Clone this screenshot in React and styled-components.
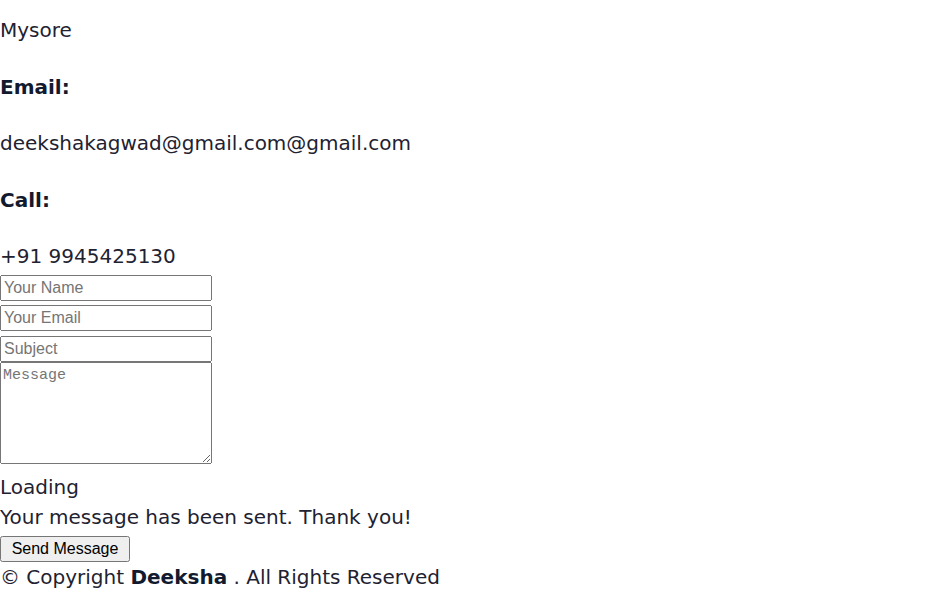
import React from "react";
import styled, { createGlobalStyle } from "styled-components";

const Global = createGlobalStyle`
  html, body { margin: 0; padding: 0; background: #ffffff; }
  body {
    font-family: "DejaVu Sans", "Open Sans", sans-serif;
    font-size: 20px;
    line-height: 30px;
    color: #1e2231;
  }
`;

const Page = styled.div`
  padding-top: 15px;
`;

const Info = styled.div`
  display: flex;
  flex-direction: column;
  gap: 26.5px;
`;

const Heading = styled.h4`
  margin: 0;
  font-size: 20px;
  line-height: 30px;
  font-weight: 700;
  color: #111a2e;
`;

const Text = styled.p`
  margin: 0;
  font-size: 20px;
  line-height: 30px;
`;

const Form = styled.form`
  display: flex;
  flex-direction: column;
  align-items: flex-start;
  margin-top: 4px;
`;

const Field = styled.input`
  box-sizing: border-box;
  width: 212px;
  height: 26px;
  margin: 0 0 ${(p) => p.$gap}px 0;
  font-family: "Liberation Sans", Arial, sans-serif;
  font-size: 16px;
  padding: 1px 2px;
`;

const Area = styled.textarea`
  box-sizing: border-box;
  width: 212px;
  height: 102px;
  margin: 0;
  font-family: "Liberation Mono", monospace;
  font-size: 15px;
  padding: 4px 2px;
`;

const Status = styled.div`
  font-size: 20px;
  line-height: 30px;
  margin-top: ${(p) => p.$top || 0}px;
`;

const Button = styled.button`
  box-sizing: border-box;
  width: 130px;
  height: 26px;
  margin: 4px 0 0;
  font-family: "Liberation Sans", Arial, sans-serif;
  font-size: 16px;
  padding: 1px 6px;
`;

const Footer = styled.div`
  font-size: 20px;
  line-height: 30px;
  strong { font-weight: 700; color: #111a2e; }
`;

export default function App() {
  return (
    <Page>
      <Global />
      <Info>
        <Text>Mysore</Text>
        <Heading>Email:</Heading>
        <Text>deekshakagwad@gmail.com@gmail.com</Text>
        <Heading>Call:</Heading>
        <Text>+91 9945425130</Text>
      </Info>
      <Form onSubmit={(e) => e.preventDefault()}>
        <Field type="text" placeholder="Your Name" $gap={4} />
        <Field type="email" placeholder="Your Email" $gap={5} />
        <Field type="text" placeholder="Subject" $gap={0} />
        <Area placeholder="Message" />
        <Status $top={8}>Loading</Status>
        <Status>Your message has been sent. Thank you!</Status>
        <Button type="submit">Send Message</Button>
      </Form>
      <Footer>
        © Copyright <strong>Deeksha</strong> . All Rights Reserved
      </Footer>
    </Page>
  );
}
